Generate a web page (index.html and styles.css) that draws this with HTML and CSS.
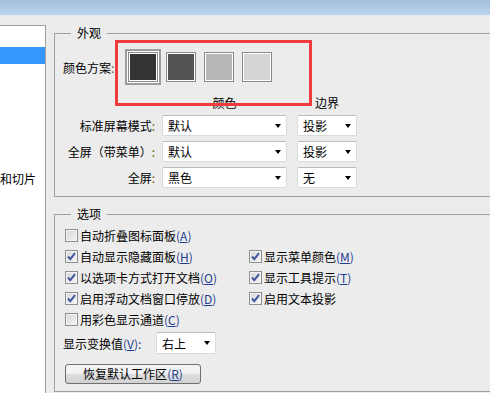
FILE: index.html
```html
<!DOCTYPE html>
<html>
<head>
  <title>首选项 - 界面</title>
  <link rel="stylesheet" href="styles.css">
</head>
<body>

<div class="titlebar"></div>

<div class="window">
  <ul class="category-list">
    <li></li>
    <li class="selected"></li>
    <li></li>
    <li></li>
    <li></li>
    <li></li>
    <li></li>
    <li>和切片</li>
    <li></li>
    <li></li>
  </ul>

  <div class="settings">
    <fieldset class="group group-look">
      <legend>外观</legend>
      <div class="scheme-row">
        <span class="scheme-label">颜色方案<span class="colon">:</span></span>
        <div class="swatches">
          <span class="swatch swatch-1 active"></span>
          <span class="swatch swatch-2"></span>
          <span class="swatch swatch-3"></span>
          <span class="swatch swatch-4"></span>
        </div>
      </div>

      <div class="mode-grid">
        <span></span>
        <span class="col-head">颜色</span>
        <span class="col-head">边界</span>

        <label class="mode-label">标准屏幕模式<span class="colon">:</span></label>
        <div class="select">默认<i class="arrow"></i></div>
        <div class="select">投影<i class="arrow"></i></div>

        <label class="mode-label">全屏（带菜单）<span class="colon">:</span></label>
        <div class="select">默认<i class="arrow"></i></div>
        <div class="select">投影<i class="arrow"></i></div>

        <label class="mode-label">全屏<span class="colon">:</span></label>
        <div class="select">黑色<i class="arrow"></i></div>
        <div class="select">无<i class="arrow"></i></div>
      </div>
    </fieldset>

    <fieldset class="group group-options">
      <legend>选项</legend>
      <div class="option-grid">
        <div class="option"><span class="check"></span>自动折叠图标面板<span class="key">(<u>A</u>)</span></div>
        <div class="option"></div>

        <div class="option"><span class="check on"><svg viewBox="0 0 11 11"><path d="M2 5.5 L4.3 8.2 L9 2.2"/></svg></span>自动显示隐藏面板<span class="key">(<u>H</u>)</span></div>
        <div class="option"><span class="check on"><svg viewBox="0 0 11 11"><path d="M2 5.5 L4.3 8.2 L9 2.2"/></svg></span>显示菜单颜色<span class="key">(<u>M</u>)</span></div>

        <div class="option"><span class="check on"><svg viewBox="0 0 11 11"><path d="M2 5.5 L4.3 8.2 L9 2.2"/></svg></span>以选项卡方式打开文档<span class="key">(<u>O</u>)</span></div>
        <div class="option"><span class="check on"><svg viewBox="0 0 11 11"><path d="M2 5.5 L4.3 8.2 L9 2.2"/></svg></span>显示工具提示<span class="key">(<u>T</u>)</span></div>

        <div class="option"><span class="check on"><svg viewBox="0 0 11 11"><path d="M2 5.5 L4.3 8.2 L9 2.2"/></svg></span>启用浮动文档窗口停放<span class="key">(<u>D</u>)</span></div>
        <div class="option"><span class="check on"><svg viewBox="0 0 11 11"><path d="M2 5.5 L4.3 8.2 L9 2.2"/></svg></span>启用文本投影</div>

        <div class="option"><span class="check"></span>用彩色显示通道<span class="key">(<u>C</u>)</span></div>
        <div class="option"></div>
      </div>

      <div class="transform-row">
        <span class="transform-label">显示变换值<span class="key">(<u>V</u>):</span></span>
        <div class="select small">右上<i class="arrow"></i></div>
      </div>

      <button class="reset-btn">恢复默认工作区<span class="key">(<u>R</u>)</span></button>
    </fieldset>
  </div>
</div>

<!-- red annotation box drawn over the swatches -->
<div class="callout"></div>

</body>
</html>
```

FILE: styles.css
```css
body {
  margin: 0;
  height: 393px;
  overflow: hidden;
  position: relative;
  background: #ececec;
  font-family: "Noto Sans CJK SC", "Microsoft YaHei", sans-serif;
  font-size: 12px;
  color: #000;
}

.titlebar {
  height: 15px;
  background: linear-gradient(#a5c0dd, #bad3ee);
}

.window {
  display: flex;
  align-items: flex-start;
}

/* left category list */
.category-list {
  list-style: none;
  margin: 10px 0 0 0;
  padding: 0;
  width: 45px;
  height: 367px;
  overflow: hidden;
  flex: none;
  background: #fff;
  border-top: 1px solid #a0a0a0;
  border-right: 1px solid #a0a0a0;
}
.category-list li {
  height: 17px;
  line-height: 17px;
  margin-bottom: 3.5px;
  white-space: nowrap;
}
.category-list li.selected {
  background: #3399ff;
  color: #fff;
}

.settings {
  margin: 11px 0 0 8px;
  width: 436px;
  flex: none;
}

.group {
  margin: 0;
  padding: 0 0 0 8px;
  border: 1px solid #a0a0a0;
  border-right: none;
}
.group legend {
  margin-left: 8px;
  padding: 0 6px;
  line-height: 14px;
}
.group-look {
  padding-top: 12px;
  padding-bottom: 8px;
}
.group-options {
  margin-top: 10px;
  padding-top: 4px;
  padding-bottom: 7px;
}

.colon { color: #6e5514; }
.key { color: #1f3d8e; }

/* colour scheme swatches */
.scheme-row {
  display: flex;
  align-items: center;
  height: 30px;
}
.scheme-label {
  width: 54px;
  flex: none;
}
.swatches {
  display: flex;
  gap: 8px;
  margin-left: 11px;
}
.swatch {
  width: 30px;
  height: 30px;
  box-sizing: border-box;
  border: 1px solid #8a8a8a;
  box-shadow: inset 0 0 0 1px #fff;
}
.swatch.active {
  box-shadow: inset 0 0 0 1px #fff, 0 0 0 1px #fff, 0 0 0 3px #9c9c9c;
}
.swatch-1 { background: #343434; }
.swatch-2 { background: #545454; }
.swatch-3 { background: #b8b8b8; }
.swatch-4 { background: #d6d6d6; }

/* screen mode table */
.mode-grid {
  display: grid;
  grid-template-columns: 93px 125px 64px;
  grid-template-rows: 14px 21px 21px 21px;
  column-gap: 6px;
  row-gap: 5px;
  margin-top: 14px;
}
.mode-grid > :nth-child(3n) {
  justify-self: end;
  width: 60px;
}
.col-head {
  text-align: center;
  line-height: 14px;
}
.mode-label {
  text-align: right;
  line-height: 21px;
  white-space: nowrap;
  padding-right: 1px;
}

.select {
  display: flex;
  align-items: center;
  justify-content: space-between;
  box-sizing: border-box;
  height: 21px;
  padding: 0 5px 0 5px;
  background: #fff;
  border: 1px solid #dadada;
  border-top-color: #bdbdbd;
  border-radius: 2px;
}
.arrow {
  width: 0;
  height: 0;
  border-left: 3.5px solid transparent;
  border-right: 3.5px solid transparent;
  border-top: 4px solid #000;
}

/* options */
.option-grid {
  display: grid;
  grid-template-columns: 184px auto;
  grid-auto-rows: 21px;
  padding-left: 2px;
}
.option {
  display: flex;
  align-items: center;
  white-space: nowrap;
}
.check {
  width: 13px;
  height: 13px;
  box-sizing: border-box;
  margin-right: 2px;
  border: 1px solid #8f8f8f;
  background: linear-gradient(135deg, #d6d6d6, #f6f6f6);
  box-shadow: inset 0 0 0 1px #f4f4f4;
}
.check svg {
  display: block;
  width: 11px;
  height: 11px;
}
.check svg path {
  fill: none;
  stroke: #41599f;
  stroke-width: 2;
}

.transform-row {
  display: flex;
  align-items: center;
  margin-top: 2px;
}
.transform-label {
  width: 93px;
  flex: none;
}
.select.small {
  width: 60px;
  height: 22px;
}

.reset-btn {
  display: block;
  margin: 10px 0 0 2px;
  width: 136px;
  height: 20px;
  padding: 0;
  font: inherit;
  color: #000;
  line-height: 18px;
  border: 1px solid #707070;
  border-radius: 3px;
  background: linear-gradient(#f3f3f3 45%, #dddddd 55%, #d2d2d2);
}

.callout {
  position: absolute;
  left: 115px;
  top: 40px;
  width: 197px;
  height: 66px;
  box-sizing: border-box;
  border: 3px solid #f03a3c;
}
```
